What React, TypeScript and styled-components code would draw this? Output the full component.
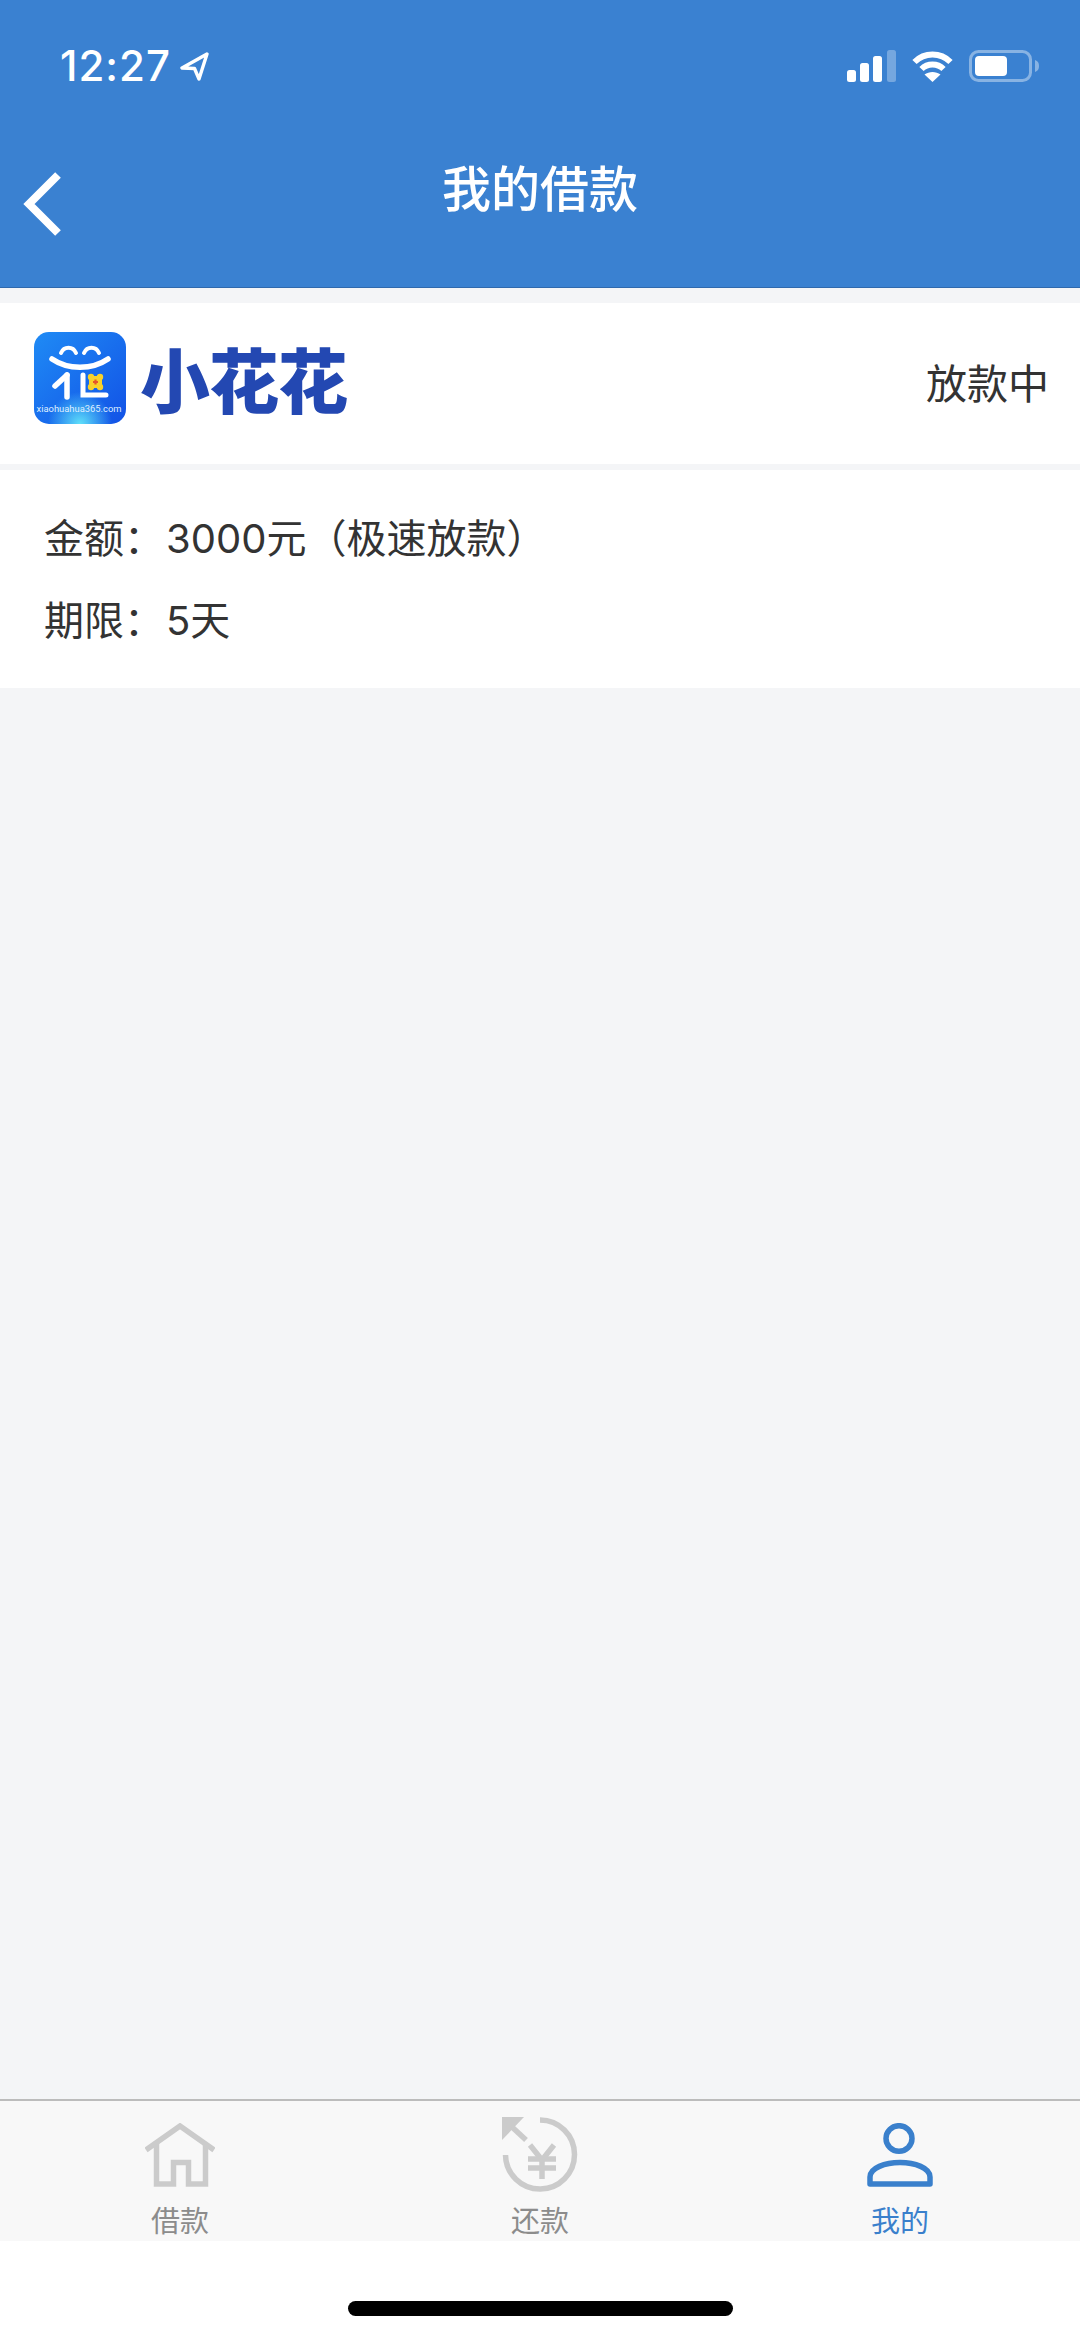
import styled, { createGlobalStyle } from "styled-components";

const CJK = `"Noto Sans CJK SC", "Noto Sans", sans-serif`;

const GlobalStyle = createGlobalStyle`
  html, body {
    margin: 0;
    padding: 0;
    background: #f4f5f7;
  }
  * {
    box-sizing: border-box;
  }
`;

const Page = styled.div`
  width: 1080px;
  height: 2339px;
  display: flex;
  flex-direction: column;
  background: #f4f5f7;
  overflow: hidden;
  font-family: ${CJK};
`;

const Header = styled.header`
  height: 288px;
  flex-shrink: 0;
  background: #3a81d1;
  border-bottom: 1px solid #2f69ad;
  color: #fff;
`;

const StatusBar = styled.div`
  height: 132px;
  padding: 50px 41px 0 60px;
  display: flex;
  justify-content: space-between;
  align-items: flex-start;
`;

const TimeGroup = styled.div`
  display: flex;
  align-items: center;
  gap: 9px;
  height: 32px;
`;

const StatusIcons = styled.div`
  display: flex;
  align-items: center;
  gap: 16px;
  height: 32px;
`;

const Time = styled.span`
  font-family: Inter, Roboto, sans-serif;
  font-size: 42px;
  font-weight: 500;
  letter-spacing: 1px;
  line-height: 32px;
`;

const NavBar = styled.div`
  position: relative;
  height: 114px;
  display: flex;
  justify-content: center;
  align-items: flex-start;
`;

const BackButton = styled.div`
  position: absolute;
  left: 22px;
  top: 40px;
  display: flex;
`;

const Title = styled.h1`
  margin: 0;
  margin-top: 20px;
  font-size: 49px;
  line-height: 68px;
  font-weight: 500;
`;

const BrandCard = styled.section`
  margin-top: 15px;
  height: 161px;
  flex-shrink: 0;
  background: #fff;
  display: flex;
  align-items: center;
  justify-content: space-between;
  padding: 0 31px 0 34px;
`;

const Brand = styled.div`
  display: flex;
  align-items: center;
  gap: 14px;
  margin-bottom: 12px;
`;

const BrandName = styled.span`
  font-size: 70px;
  line-height: 80px;
  font-weight: 900;
  color: #2348b2;
  letter-spacing: -1px;
`;

const Status = styled.span`
  font-size: 41px;
  line-height: 56px;
  color: #333;
  margin-bottom: 5px;
`;

const Details = styled.section`
  margin-top: 6px;
  height: 218px;
  flex-shrink: 0;
  background: #fff;
  padding: 41px 44px 0;
  display: flex;
  flex-direction: column;
  gap: 26px;
`;

const DetailRow = styled.div`
  font-family: Inter, ${CJK};
  font-size: 40px;
  line-height: 56px;
  color: #333;
  white-space: nowrap;
`;

const DetailValue = styled.span`
  margin-left: 2px;
`;

const Spacer = styled.div`
  flex: 1;
`;

const TabBar = styled.nav`
  height: 142px;
  flex-shrink: 0;
  background: #f8f8f8;
  border-top: 2px solid #bcbcbc;
  display: grid;
  grid-template-columns: repeat(3, 1fr);
`;

const Tab = styled.div<{ $active?: boolean }>`
  display: flex;
  flex-direction: column;
  align-items: center;
  color: ${(p) => (p.$active ? "#3a80cc" : "#8c8c8c")};
`;

const TabIcon = styled.div`
  height: 98px;
  padding-top: 9px;
  display: flex;
  align-items: center;
  justify-content: center;
`;

const TabLabel = styled.span`
  font-size: 29px;
  line-height: 40px;
`;

const HomeArea = styled.div`
  height: 98px;
  flex-shrink: 0;
  background: #fff;
  display: flex;
  justify-content: center;
  padding-top: 60px;
`;

const HomeIndicator = styled.div`
  width: 385px;
  height: 15px;
  border-radius: 8px;
  background: #000;
`;

const SignalIcon = () => (
  <svg width="49" height="32" viewBox="0 0 49 32">
    <rect x="0" y="20" width="9" height="12" rx="2.5" fill="#fff" />
    <rect x="13" y="13" width="9" height="19" rx="2.5" fill="#fff" />
    <rect x="26" y="6" width="9" height="26" rx="2.5" fill="#fff" />
    <rect x="40" y="0" width="9" height="32" rx="2.5" fill="#fff" opacity="0.3" />
  </svg>
);

const WifiIcon = () => (
  <svg width="41" height="32" viewBox="0 0 41 32" fill="none" stroke="#fff" strokeWidth="6">
    <path d="M2.5 12 C12.5 2 28.5 2 38.5 12" />
    <path d="M9.5 19 C15.5 13 25.5 13 31.5 19" />
    <path d="M20.5 32 L12.5 24.5 C17 21 24 21 28.5 24.5 Z" fill="#fff" stroke="none" />
  </svg>
);

const BatteryIcon = () => (
  <svg width="70" height="32" viewBox="0 0 70 32">
    <rect x="1.5" y="1.5" width="60" height="29" rx="8" fill="none" stroke="#fff" strokeOpacity="0.4" strokeWidth="3" />
    <rect x="6" y="6" width="32" height="20" rx="4" fill="#fff" />
    <path d="M66 10 C69 11 70 13 70 16 C70 19 69 21 66 22 Z" fill="#fff" opacity="0.4" />
  </svg>
);

const LocationIcon = () => (
  <svg width="29" height="29" viewBox="0 0 29 29" fill="none" stroke="#fff" strokeWidth="3.4" strokeLinejoin="round">
    <path d="M27 2 L2 16 L14.5 16.5 L19 27 Z" />
  </svg>
);

const BackIcon = () => (
  <svg width="40" height="64" viewBox="0 0 40 64" fill="none" stroke="#fff" strokeWidth="8">
    <path d="M36 3 L7 32 L36 61" />
  </svg>
);

const LogoMark = () => (
  <svg width="92" height="92" viewBox="0 0 92 92">
    <defs>
      <linearGradient id="logoBg" x1="0" y1="0" x2="1" y2="1">
        <stop offset="0" stopColor="#1f8bf5" />
        <stop offset="1" stopColor="#1252e6" />
      </linearGradient>
      <radialGradient id="logoGlow" cx="0.5" cy="1" r="0.35">
        <stop offset="0" stopColor="#5fe0fa" />
        <stop offset="1" stopColor="#5fe0fa" stopOpacity="0" />
      </radialGradient>
    </defs>
    <rect width="92" height="92" rx="15" fill="url(#logoBg)" />
    <rect width="92" height="92" rx="15" fill="url(#logoGlow)" />
    <g fill="none" stroke="#fff" strokeLinecap="round">
      <path d="M27 21 C30 14 39 14 42 21" strokeWidth="4" />
      <path d="M50 21 C53 14 62 14 65 21" strokeWidth="4" />
      <path d="M18 27 C34 38 58 38 74 27" strokeWidth="5.5" />
      <path d="M33 43 L21 54" strokeWidth="5.5" />
      <path d="M33 43 L33 65" strokeWidth="5.5" />
      <path d="M49 43 L49 63 L72 63" strokeWidth="5" />
    </g>
    <g fill="#f8d22c">
      <rect x="55" y="44" width="13" height="12" />
      <circle cx="57" cy="45" r="3.2" />
      <circle cx="66" cy="45" r="3.2" />
      <circle cx="57" cy="55" r="3.2" />
      <circle cx="66" cy="55" r="3.2" />
    </g>
    <path d="M61.5 47.5 V52.5 M59 50 H64" stroke="#e4572a" strokeWidth="2.2" />
    <text x="45" y="80" fontSize="9.4" fill="#dfeeff" textAnchor="middle" fontFamily="Roboto, sans-serif">
      xiaohuahua365.com
    </text>
  </svg>
);

const HomeIcon = () => (
  <svg width="70" height="64" viewBox="0 0 70 64" fill="none" stroke="#cbcbcb" strokeWidth="5.5">
    <path d="M1 27 L35 3 L69 27" />
    <path d="M11.5 20 V61 H28.5 V39.5 H43.5 V61 H60.5 V20" />
  </svg>
);

const RepayIcon = () => (
  <svg width="76" height="76" viewBox="0 0 76 76" fill="none" stroke="#cbcbcb">
    <path d="M38 3 A34.5 34.5 0 1 1 3.5 38" strokeWidth="5.5" />
    <path d="M0 0 H22 L0 23 Z" fill="#cbcbcb" stroke="none" />
    <path d="M10 10 L24 23" strokeWidth="5.5" />
    <g strokeWidth="5.5">
      <path d="M28 28 L40 43 L52 28" />
      <path d="M40 43 V62" />
      <path d="M26 42 H54" />
      <path d="M26 51 H54" />
    </g>
  </svg>
);

const UserIcon = () => (
  <svg width="66" height="64" viewBox="0 0 66 64" fill="none" stroke="#3a80cc" strokeWidth="5.5">
    <ellipse cx="32" cy="15.5" rx="13" ry="12.8" />
    <path d="M3 61 V54 C3 45 18 39.5 33 39.5 C48 39.5 63 45 63 54 V61 Z" strokeLinejoin="round" />
  </svg>
);

const App = () => {
  return (
    <Page>
      <GlobalStyle />
      <Header>
        <StatusBar>
          <TimeGroup>
            <Time>12:27</Time>
            <LocationIcon />
          </TimeGroup>
          <StatusIcons>
            <SignalIcon />
            <WifiIcon />
            <BatteryIcon />
          </StatusIcons>
        </StatusBar>
        <NavBar>
          <BackButton>
            <BackIcon />
          </BackButton>
          <Title>我的借款</Title>
        </NavBar>
      </Header>

      <BrandCard>
        <Brand>
          <LogoMark />
          <BrandName>小花花</BrandName>
        </Brand>
        <Status>放款中</Status>
      </BrandCard>

      <Details>
        <DetailRow>
          金额：<DetailValue>3000元（极速放款）</DetailValue>
        </DetailRow>
        <DetailRow>
          期限：<DetailValue>5天</DetailValue>
        </DetailRow>
      </Details>

      <Spacer />

      <TabBar>
        <Tab>
          <TabIcon>
            <HomeIcon />
          </TabIcon>
          <TabLabel>借款</TabLabel>
        </Tab>
        <Tab>
          <TabIcon>
            <RepayIcon />
          </TabIcon>
          <TabLabel>还款</TabLabel>
        </Tab>
        <Tab $active>
          <TabIcon>
            <UserIcon />
          </TabIcon>
          <TabLabel>我的</TabLabel>
        </Tab>
      </TabBar>

      <HomeArea>
        <HomeIndicator />
      </HomeArea>
    </Page>
  );
};

export default App;
